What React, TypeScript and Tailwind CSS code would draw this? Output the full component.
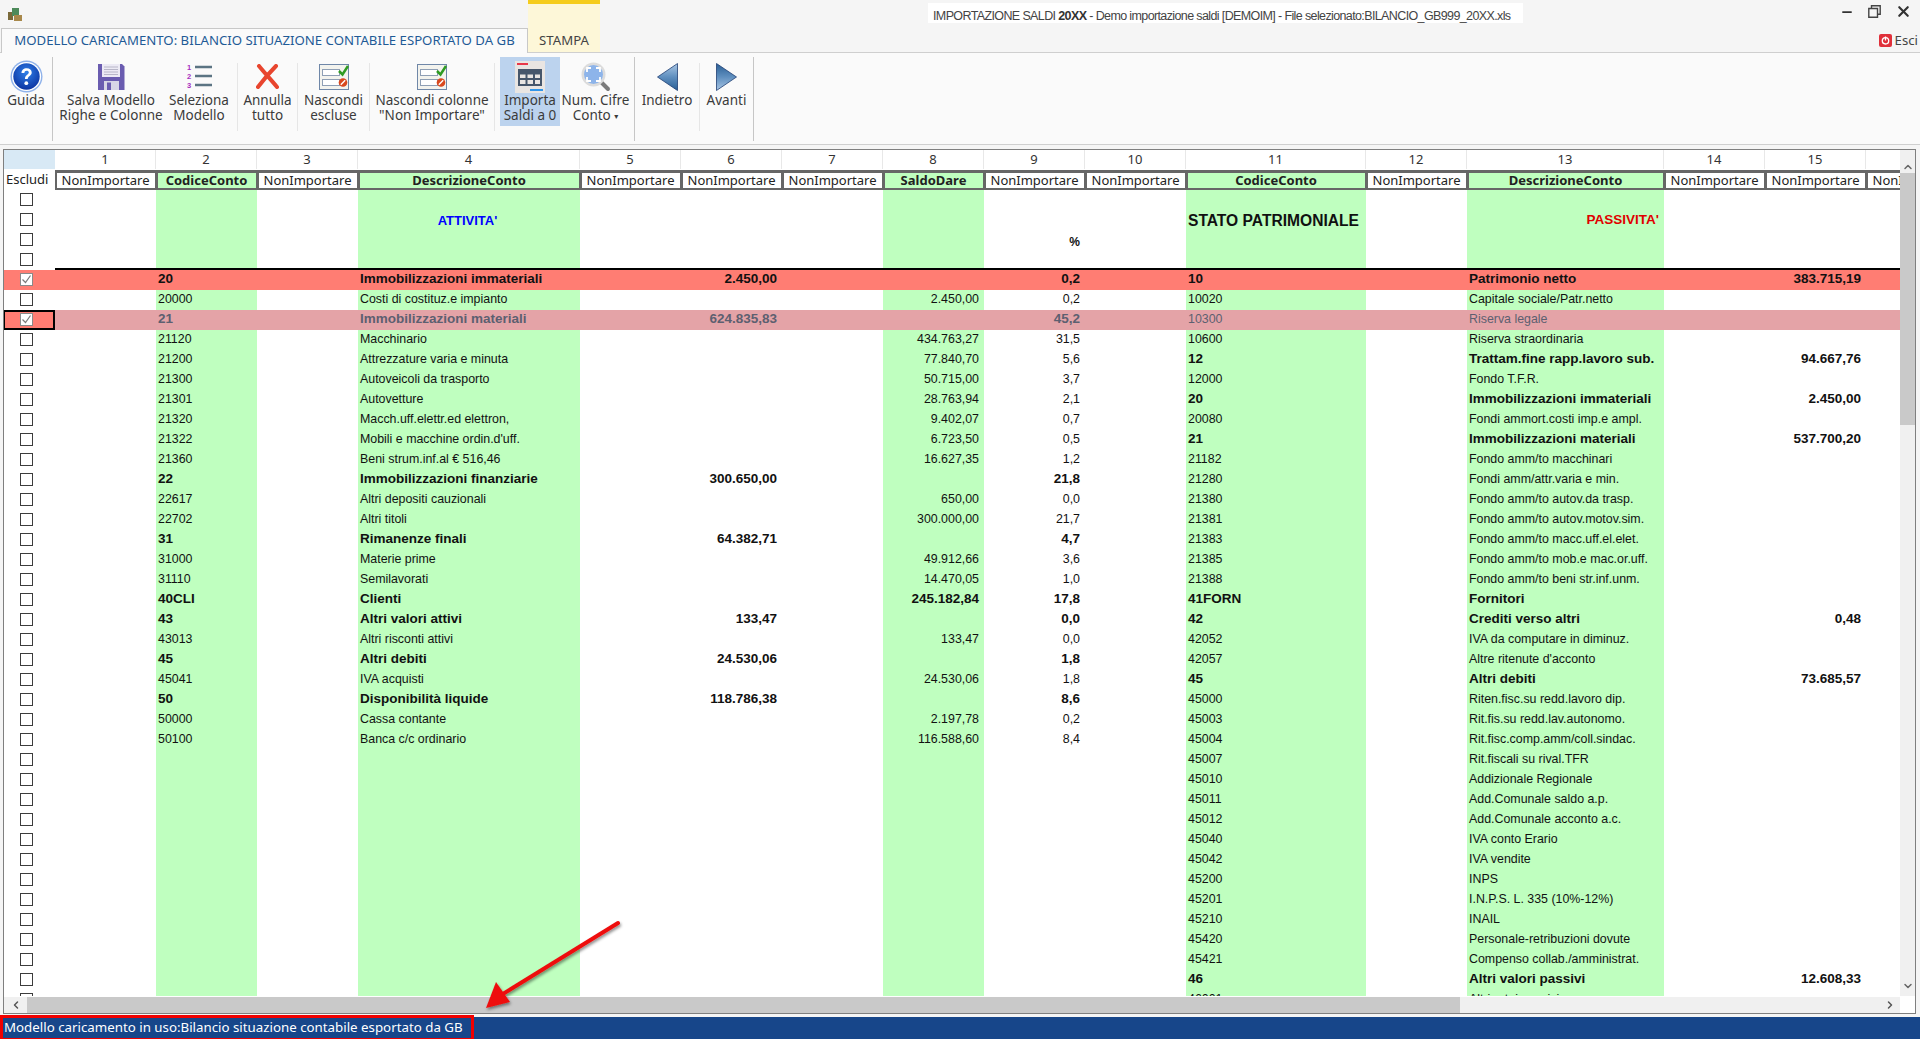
import { ReactNode } from 'react'
import { ChevronDown, ChevronLeft, ChevronRight, ChevronUp, Minus, X } from 'lucide-react'

const uiFont = "font-['Noto_Sans','DejaVu_Sans',sans-serif]"
const cellFont = "font-['Liberation_Sans',Arial,sans-serif]"

// column widths of the grid, 16 columns after the "Escludi" one
const widths = [
  'w-[101px]', 'w-[101px]', 'w-[101px]', 'w-[222px]', 'w-[101px]', 'w-[101px]', 'w-[101px]', 'w-[101px]',
  'w-[101px]', 'w-[101px]', 'w-[180px]', 'w-[101px]', 'w-[197px]', 'w-[101px]', 'w-[101px]', 'w-[101px]',
]

const headers = [
  'NonImportare', 'CodiceConto', 'NonImportare', 'DescrizioneConto', 'NonImportare', 'NonImportare', 'NonImportare', 'SaldoDare',
  'NonImportare', 'NonImportare', 'CodiceConto', 'NonImportare', 'DescrizioneConto', 'NonImportare', 'NonImportare', 'NonImportare',
]

const greenCols = [1, 3, 7, 10, 12]

// code, description, col 6, col 8, %, code, description, col 15
const rows: string[][] = [
  ['', '', '', '', '', '', '', ''],
  ['', '', '', '', '', '', '', ''],
  ['', '', '', '', '', '', '', ''],
  ['', '', '', '', '', '', '', ''],
  ['20', 'Immobilizzazioni immateriali', '2.450,00', '', '0,2', '10', 'Patrimonio netto', '383.715,19'],
  ['20000', 'Costi di costituz.e impianto', '', '2.450,00', '0,2', '10020', 'Capitale sociale/Patr.netto', ''],
  ['21', 'Immobilizzazioni materiali', '624.835,83', '', '45,2', '10300', 'Riserva legale', ''],
  ['21120', 'Macchinario', '', '434.763,27', '31,5', '10600', 'Riserva straordinaria', ''],
  ['21200', 'Attrezzature varia e minuta', '', '77.840,70', '5,6', '12', 'Trattam.fine rapp.lavoro sub.', '94.667,76'],
  ['21300', 'Autoveicoli da trasporto', '', '50.715,00', '3,7', '12000', 'Fondo T.F.R.', ''],
  ['21301', 'Autovetture', '', '28.763,94', '2,1', '20', 'Immobilizzazioni immateriali', '2.450,00'],
  ['21320', 'Macch.uff.elettr.ed elettron,', '', '9.402,07', '0,7', '20080', 'Fondi ammort.costi imp.e ampl.', ''],
  ['21322', "Mobili e macchine ordin.d'uff.", '', '6.723,50', '0,5', '21', 'Immobilizzazioni materiali', '537.700,20'],
  ['21360', 'Beni strum.inf.al € 516,46', '', '16.627,35', '1,2', '21182', 'Fondo amm/to macchinari', ''],
  ['22', 'Immobilizzazioni finanziarie', '300.650,00', '', '21,8', '21280', 'Fondi amm/attr.varia e min.', ''],
  ['22617', 'Altri depositi cauzionali', '', '650,00', '0,0', '21380', 'Fondo amm/to autov.da trasp.', ''],
  ['22702', 'Altri titoli', '', '300.000,00', '21,7', '21381', 'Fondo amm/to autov.motov.sim.', ''],
  ['31', 'Rimanenze finali', '64.382,71', '', '4,7', '21383', 'Fondo amm/to macc.uff.el.elet.', ''],
  ['31000', 'Materie prime', '', '49.912,66', '3,6', '21385', 'Fondo amm/to mob.e mac.or.uff.', ''],
  ['31110', 'Semilavorati', '', '14.470,05', '1,0', '21388', 'Fondo amm/to beni str.inf.unm.', ''],
  ['40CLI', 'Clienti', '', '245.182,84', '17,8', '41FORN', 'Fornitori', ''],
  ['43', 'Altri valori attivi', '133,47', '', '0,0', '42', 'Crediti verso altri', '0,48'],
  ['43013', 'Altri risconti attivi', '', '133,47', '0,0', '42052', 'IVA da computare in diminuz.', ''],
  ['45', 'Altri debiti', '24.530,06', '', '1,8', '42057', "Altre ritenute d'acconto", ''],
  ['45041', 'IVA acquisti', '', '24.530,06', '1,8', '45', 'Altri debiti', '73.685,57'],
  ['50', 'Disponibilità liquide', '118.786,38', '', '8,6', '45000', 'Riten.fisc.su redd.lavoro dip.', ''],
  ['50000', 'Cassa contante', '', '2.197,78', '0,2', '45003', 'Rit.fis.su redd.lav.autonomo.', ''],
  ['50100', 'Banca c/c ordinario', '', '116.588,60', '8,4', '45004', 'Rit.fisc.comp.amm/coll.sindac.', ''],
  ['', '', '', '', '', '45007', 'Rit.fiscali su rival.TFR', ''],
  ['', '', '', '', '', '45010', 'Addizionale Regionale', ''],
  ['', '', '', '', '', '45011', 'Add.Comunale saldo a.p.', ''],
  ['', '', '', '', '', '45012', 'Add.Comunale acconto a.c.', ''],
  ['', '', '', '', '', '45040', 'IVA conto Erario', ''],
  ['', '', '', '', '', '45042', 'IVA vendite', ''],
  ['', '', '', '', '', '45200', 'INPS', ''],
  ['', '', '', '', '', '45201', 'I.N.P.S. L. 335 (10%-12%)', ''],
  ['', '', '', '', '', '45210', 'INAIL', ''],
  ['', '', '', '', '', '45420', 'Personale-retribuzioni dovute', ''],
  ['', '', '', '', '', '45421', 'Compenso collab./amministrat.', ''],
  ['', '', '', '', '', '46', 'Altri valori passivi', '12.608,33'],
  ['', '', '', '', '', '46001', 'Altri ratei passivi', ''],
]

const isBold = (code: string) => code !== '' && !/^\d{5}$/.test(code)

function RibbonButton({ label, width, icon, active, className }: { label: ReactNode; width: string; icon: ReactNode; active?: boolean; className?: string }) {
  return (
    <div className={`${width} ${className ?? ''} shrink-0 flex flex-col items-center text-center`}>
      <div className={`w-full h-[69px] -mt-[3px] pt-[3px] flex flex-col items-center ${active ? 'bg-[#bcd3ee]' : ''}`}>
        <div className="h-[33px] flex items-center justify-center">{icon}</div>
        <div className="text-[13.5px] leading-[15px] text-[#3b3b3b] whitespace-nowrap">{label}</div>
      </div>
    </div>
  )
}

const Sep = ({ strong }: { strong?: boolean }) => (
  <div className={`shrink-0 w-px self-start ${strong ? 'h-[84px] -mt-[3px] bg-[#c6c6c6]' : 'h-[68px] mt-[3px] bg-[#e6e6e6]'}`} />
)

const HelpIcon = () => (
  <svg width="33" height="33" viewBox="0 0 33 33">
    <defs>
      <radialGradient id="h" cx="50%" cy="35%" r="70%">
        <stop offset="0" stopColor="#2f7fe8" />
        <stop offset="1" stopColor="#0a2f9c" />
      </radialGradient>
    </defs>
    <circle cx="16.5" cy="16.5" r="16" fill="#8fb2ea" />
    <circle cx="16.5" cy="16.5" r="14.6" fill="#fff" />
    <circle cx="16.5" cy="16.5" r="13.2" fill="url(#h)" />
    <path d="M11.5 13c0-3 2.2-4.8 5.2-4.8 3 0 5 1.7 5 4.2 0 3.4-4 3.6-4 6.6h-2.8c0-4.2 3.9-4.4 3.9-6.6 0-1-.8-1.7-2.1-1.7-1.4 0-2.3.9-2.3 2.3z" fill="#fff" />
    <circle cx="16.3" cy="23.2" r="1.9" fill="#fff" />
  </svg>
)

const SaveIcon = () => (
  <svg width="27" height="28" viewBox="0 0 27 28">
    <path d="M0 1h24l2.500 2.500V27H0z" fill="#6a5cb0" />
    <rect x="4" y="1" width="18" height="13" fill="#eceaf4" />
    <path d="M6 4h14M6 6.500h14M6 9h14M6 11.500h14" stroke="#b8b6c8" strokeWidth="1" />
    <rect x="6" y="18" width="15" height="9" fill="#d8d6e6" />
    <rect x="9" y="19.500" width="4" height="7.500" fill="#6a5cb0" />
  </svg>
)

const ListIcon = () => (
  <svg width="27" height="25" viewBox="0 0 27 25">
    <path d="M9 3h17M9 12h17M9 21h17" stroke="#5b7483" strokeWidth="2.500" />
    <text x="1" y="6" fontSize="7.500" fontWeight="700" fill="#a52dc0" fontFamily="Liberation Sans">1</text>
    <text x="1" y="15" fontSize="7.500" fontWeight="700" fill="#a52dc0" fontFamily="Liberation Sans">2</text>
    <text x="1" y="24" fontSize="7.500" fontWeight="700" fill="#a52dc0" fontFamily="Liberation Sans">3</text>
  </svg>
)

const CancelIcon = () => (
  <svg width="23" height="25" viewBox="0 0 23 25">
    <path d="M3 2c4 5 13 15 18 21M20 2C14 8 8 15 2 23" stroke="#e8452e" strokeWidth="4" strokeLinecap="round" fill="none" />
  </svg>
)

const HideIcon = () => (
  <svg width="30" height="26" viewBox="0 0 30 26">
    <rect x=".5" y=".5" width="29" height="25" fill="#f3f3ee" stroke="#6f87a8" />
    <rect x="3.500" y="5.500" width="17" height="6" fill="#fff" stroke="#8f9fb5" />
    <rect x="3.500" y="15.500" width="17" height="6" fill="#fff" stroke="#8f9fb5" />
    <path d="M20 7l3.500 3.500L29 2" stroke="#2f9b22" strokeWidth="2.500" fill="none" />
    <circle cx="24" cy="18.500" r="4.300" fill="#d9481e" />
    <path d="M21.800 20.700l4.400-4.400" stroke="#fff" strokeWidth="1.400" />
  </svg>
)

const TableIcon = () => (
  <svg width="30" height="32" viewBox="0 0 30 32">
    <rect width="30" height="32" fill="#e9e5e2" />
    <path d="M2 3h11" stroke="#e8384a" strokeWidth="2" />
    <path d="M15 29h13" stroke="#2f95ea" strokeWidth="2" />
    <rect x="3" y="8" width="24" height="17" fill="#46566b" />
    <path d="M5 13.500h5.500v3.500H5zM12.500 13.500H18v3.500h-5.500zM20 13.500h5v3.500h-5zM5 19h5.500v4H5zM12.500 19H18v4h-5.500zM20 19h5v4h-5z" fill="#e9e5e2" />
  </svg>
)

const ZoomIcon = () => (
  <svg width="30" height="30" viewBox="0 0 30 30">
    <path d="M19 19l8 8" stroke="#7b7b7b" strokeWidth="4" strokeLinecap="round" />
    <circle cx="12.500" cy="12.500" r="12" fill="#dcdcdc" />
    <circle cx="12.500" cy="12.500" r="9.500" fill="#8db4ea" />
    <path d="M6 10V6h4M15 6h4v4M19 15v4h-4M10 19H6v-4" stroke="#fff" strokeWidth="1.800" fill="none" />
  </svg>
)

const ArrowIcon = ({ right }: { right?: boolean }) => (
  <svg width="21" height="28" viewBox="0 0 21 28" className={right ? 'rotate-180' : ''}>
    <defs>
      <linearGradient id="ar" x1="0" y1="0" x2="0" y2="1">
        <stop offset="0" stopColor="#a9c6e4" />
        <stop offset=".5" stopColor="#5f8fbf" />
        <stop offset="1" stopColor="#2a5f95" />
      </linearGradient>
    </defs>
    <path d="M20.500 .5v27L.5 14z" fill="url(#ar)" stroke="#1f3f73" strokeWidth=".8" />
  </svg>
)

function Checkbox({ checked }: { checked?: boolean }) {
  return (
    <div className={`w-[13px] h-[13px] -mt-[2px] flex items-center justify-center bg-white border ${checked ? 'border-[#8a8a8a]' : 'border-[#3c3c3c]'}`}>
      {checked && (
        <svg width="11" height="11" viewBox="0 0 11 11">
          <path d="M1.500 5.500l3 3L9.500 1.500" stroke="#7a7a7a" strokeWidth="1.200" fill="none" />
        </svg>
      )}
    </div>
  )
}

function GridRow({ row, index }: { row: string[]; index: number }) {
  const [code, desc, amount, saldo, pct, code2, desc2, amount2] = row
  const red = index === 4
  const pink = index === 6
  const left = isBold(code)
  const right = isBold(code2)
  const values: Record<number, { text: string; bold: boolean; right?: boolean }> = {
    1: { text: code, bold: left },
    3: { text: desc, bold: left },
    5: { text: amount, bold: true, right: true },
    7: { text: saldo, bold: left, right: true },
    8: { text: pct, bold: left, right: true },
    10: { text: code2, bold: right },
    12: { text: desc2, bold: right },
    14: { text: amount2, bold: true, right: true },
  }
  return (
    <div className="flex h-5 shrink-0">
      <div
        className={`shrink-0 flex items-center ${
          red ? 'w-[51px] pl-4 bg-[#ff7d73]' : pink ? 'w-[52px] -ml-px pl-[15px] bg-[#ff7d73] border-2 border-black' : 'w-[51px] pl-4 bg-white'
        }`}
      >
        <Checkbox checked={red || pink} />
      </div>
      {widths.map((w, i) => {
        const cell = values[i]
        const bg = red ? 'bg-[#ff7d73]' : pink ? 'bg-[#e4a3a7]' : greenCols.includes(i) ? 'bg-[#bfffbf]' : 'bg-white'
        const color = pink ? 'text-[#5d5f70]' : 'text-[#111]'
        return (
          <div
            key={i}
            className={`${w} ${bg} ${color} ${index === 3 ? 'border-b-2 border-black' : ''} shrink-0 flex items-center whitespace-nowrap overflow-hidden pb-px ${
              cell?.right ? 'justify-end pr-[5px]' : 'pl-[2px]'
            } ${cell?.bold ? 'font-bold text-[13.5px]' : 'text-[12.4px]'}`}
          >
            {cell?.text}
            {index === 1 && i === 3 && (
              <span className="w-full mt-[2px] pr-[5px] text-center font-bold text-[13px] text-[#0000ff]">ATTIVITA'</span>
            )}
            {index === 1 && i === 10 && <span className="mt-[2px] font-bold text-[15.6px] text-[#111]">STATO PATRIMONIALE</span>}
            {index === 1 && i === 12 && (
              <span className="w-full mt-[2px] pr-[5px] text-right font-bold text-[13.5px] text-[#e00000]">PASSIVITA'</span>
            )}
            {index === 2 && i === 8 && <span className="w-full mt-[4px] text-right font-bold text-[12px]">%</span>}
          </div>
        )
      })}
    </div>
  )
}

export default function App() {
  return (
    <div className={`relative w-[1920px] h-[1039px] overflow-hidden bg-[#f5f5f5] flex flex-col ${uiFont}`}>
      {/* Title bar */}
      <div className="h-7 shrink-0 flex items-center relative">
        <svg width="15" height="15" viewBox="0 0 15 15" className="ml-[8px]">
          <rect x="0" y="5" width="5" height="8" fill="#7a6a3a" />
          <rect x="4" y="1" width="7" height="8" fill="#4d8a5a" />
          <rect x="6" y="8" width="8" height="6" fill="#a8884a" />
        </svg>
        <div className={`ml-[905px] h-5 -mt-[3px] w-[595px] bg-white flex items-center pl-[5px] pt-[8px] text-[12.5px] tracking-[-0.62px] text-[#444] whitespace-nowrap ${cellFont}`}>
          IMPORTAZIONE SALDI&nbsp;<span className="font-bold text-[#333]">20XX</span>&nbsp;- Demo importazione saldi [DEMOIM] - File selezionato:BILANCIO_GB999_20XX.xls
        </div>
        <div className="ml-auto -mt-[5px] flex items-center gap-[14px] pr-[8px] text-[#333]">
          <Minus size={14} strokeWidth={3} />
          <svg width="13" height="13" viewBox="0 0 13 13">
            <path d="M3.500 3V.8h8.700v8.400H10M.8 3.500h8.700v8.700H.8z" stroke="#444" strokeWidth="1.400" fill="none" />
          </svg>
          <X size={17} strokeWidth={3} />
        </div>
      </div>

      {/* yellow band over the STAMPA tab */}
      <div className="absolute left-[528px] top-0 w-[72px] h-[52px] bg-[#fdf7d8] border-t-4 border-[#f5cc1c]" />

      {/* Tabs */}
      <div className="h-6 shrink-0 pt-px flex items-center relative z-10 text-[13.2px]">
        <div className="ml-px w-[527px] h-[25px] flex items-center justify-center bg-[#fafafa] border-x border-t border-[#c8c8c8] text-[#1f5a96] whitespace-nowrap">
          MODELLO CARICAMENTO: BILANCIO SITUAZIONE CONTABILE ESPORTATO DA GB
        </div>
        <div className="w-[72px] text-center text-[#444]">STAMPA</div>
        <div className="ml-auto flex items-center gap-[3px] pr-[2px] text-[#444]">
          <svg width="13" height="13" viewBox="0 0 13 13">
            <rect width="13" height="13" rx="2" fill="#e0303a" />
            <circle cx="6.500" cy="6.800" r="3.200" fill="none" stroke="#fff" strokeWidth="1.300" />
            <path d="M6.500 2.500v4" stroke="#fff" strokeWidth="1.300" />
          </svg>
          Esci
        </div>
      </div>

      {/* Ribbon */}
      <div className="h-[93px] shrink-0 bg-[#fafafa] border-y border-[#cfcfcf] flex pt-[7px]">
        <RibbonButton width="w-[52px]" label="Guida" icon={<HelpIcon />} />
        <Sep strong />
        <RibbonButton width="w-[116px]" label={<>Salva Modello<br />Righe e Colonne</>} icon={<SaveIcon />} />
        <RibbonButton width="w-[60px]" label={<>Seleziona<br />Modello</>} icon={<ListIcon />} className="mr-[8px]" />
        <Sep />
        <RibbonButton width="w-[59px]" label={<>Annulla<br />tutto</>} icon={<CancelIcon />} />
        <Sep />
        <RibbonButton width="w-[71px]" label={<>Nascondi<br />escluse</>} icon={<HideIcon />} />
        <Sep />
        <RibbonButton width="w-[124px]" label={<>Nascondi colonne<br />"Non Importare"</>} icon={<HideIcon />} />
        <Sep />
        <RibbonButton width="w-[60px]" className="ml-[5px]" active label={<>Importa<br />Saldi a 0</>} icon={<TableIcon />} />
        <RibbonButton
          width="w-[71px]"
          className="mr-[3px]"
          label={<>Num. Cifre<br />Conto <span className="text-[8px] align-[1px]">▾</span></>}
          icon={<ZoomIcon />}
        />
        <Sep strong />
        <RibbonButton width="w-[64px]" label="Indietro" icon={<ArrowIcon />} />
        <Sep />
        <RibbonButton width="w-[53px]" label="Avanti" icon={<ArrowIcon right />} />
        <Sep strong />
      </div>

      {/* Grid */}
      <div className="mt-1 ml-[3px] w-[1913px] h-[865px] shrink-0 border border-[#7f7f7f] bg-white flex flex-col">
        <div className="flex flex-1 min-h-0">
          <div className="w-[1896px] shrink-0 overflow-hidden flex flex-col">
            <div className="flex h-[19px] shrink-0 text-[13px] text-[#333]">
              <div className="w-[51px] shrink-0 bg-[#d8e9f5]" />
              {widths.map((w, i) => (
                <div key={i} className={`${w} shrink-0 text-center border-r border-[#e8e8e8] overflow-hidden`}>
                  {i + 1}
                </div>
              ))}
            </div>
            <div className="flex h-[21px] shrink-0 text-[13px] text-[#222]">
              <div className="w-[51px] shrink-0 pl-[2px] leading-[20px]">Escludi</div>
              {widths.map((w, i) => (
                <div
                  key={i}
                  className={`${w} shrink-0 mt-px pr-px border-t-[3px] border-b-2 border-l-2 border-r border-[#666] flex items-center justify-center overflow-hidden whitespace-nowrap ${
                    greenCols.includes(i) ? 'bg-[#bfffbf] font-bold' : 'bg-white'
                  }`}
                >
                  {headers[i]}
                </div>
              ))}
            </div>
            <div className={`flex-1 min-h-0 overflow-hidden flex flex-col ${cellFont}`}>
              {rows.map((r, i) => (
                <GridRow key={i} row={r} index={i} />
              ))}
            </div>
          </div>
          {/* vertical scrollbar */}
          <div className="w-[15px] shrink-0 bg-[#f0f0f0] flex flex-col items-center text-[#666]">
            <div className="h-[23px] flex items-end">
              <ChevronUp size={12} strokeWidth={3} />
            </div>
            <div className="w-full h-[252px] bg-[#c9c9c9]" />
            <div className="flex-1" />
            <ChevronDown size={12} strokeWidth={3} className="mb-1" />
          </div>
        </div>
        {/* horizontal scrollbar */}
        <div className="h-4 shrink-0 mt-px flex items-center text-[#555]">
          <div className="w-[23px] h-full bg-[#f0f0f0] flex items-center justify-center">
            <ChevronLeft size={12} strokeWidth={3} />
          </div>
          <div className="w-[1433px] h-full bg-[#c9c9c9]" />
          <div className="w-[440px] h-full bg-[#f0f0f0] flex items-center justify-end pr-[4px]">
            <ChevronRight size={12} strokeWidth={3} />
          </div>
        </div>
      </div>

      {/* Status bar */}
      <div className="mt-[3px] flex-1 bg-[#17468a] flex items-stretch">
        <div className="w-[474px] -mt-[2px] border-[3px] border-[#f00000] flex items-center pl-px text-[13.3px] text-white whitespace-nowrap">
          Modello caricamento in uso:Bilancio situazione contabile esportato da GB
        </div>
      </div>

      {/* red arrow pointing at the status bar */}
      <svg className="absolute left-[470px] top-[915px]" width="160" height="100" viewBox="0 0 160 100">
        <defs>
          <filter id="s" x="-20%" y="-20%" width="140%" height="140%">
            <feDropShadow dx="1" dy="2" stdDeviation="1.500" floodColor="#000" floodOpacity=".45" />
          </filter>
        </defs>
        <g filter="url(#s)">
          <path d="M148 8L28 82" stroke="#ee1111" strokeWidth="4" strokeLinecap="round" />
          <path d="M16 93l10-26 14 20z" fill="#ee1111" />
        </g>
      </svg>
    </div>
  )
}
